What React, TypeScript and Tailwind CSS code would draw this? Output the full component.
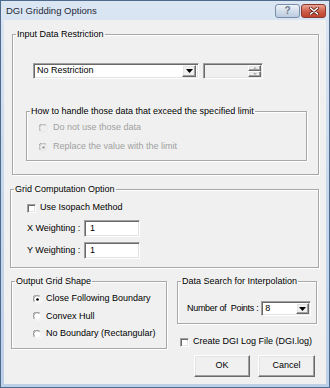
import React from 'react';

const sunken =
  'border border-t-[#a0a0a0] border-l-[#a0a0a0] border-b-white border-r-white shadow-[inset_1px_1px_0_#696969,inset_-1px_-1px_0_#e3e3e3]';
const raised =
  'border border-t-white border-l-white border-b-[#696969] border-r-[#696969] shadow-[inset_-1px_-1px_0_#a0a0a0,inset_1px_1px_0_#e3e3e3] bg-[#f0f0f0]';

function Group({
  label,
  className,
  children,
}: {
  label: string;
  className: string;
  children?: React.ReactNode;
}) {
  return (
    <fieldset
      className={`border border-[#a8a8a8] shadow-[inset_1px_1px_0_#fff,1px_1px_0_#fff] min-w-0 ${className}`}
    >
      <legend className="ml-[3px] px-[1px] leading-[11px] text-black">{label}</legend>
      {children}
    </fieldset>
  );
}

function Radio({ checked, disabled }: { checked?: boolean; disabled?: boolean }) {
  return (
    <svg width="9" height="9" viewBox="0 0 12 12" className="shrink-0">
      <circle cx="6" cy="6" r="5.5" fill={disabled ? '#f0f0f0' : '#fff'} />
      <path d="M1.2 9 A5.3 5.3 0 0 1 9 1.2" fill="none" stroke="#9a9a9a" strokeWidth="1.2" />
      <path d="M2.2 8.6 A4.3 4.3 0 0 1 8.6 2.2" fill="none" stroke={disabled ? '#b0b0b0' : '#696969'} strokeWidth="1" />
      <path d="M9 1.2 A5.3 5.3 0 0 1 1.2 9" fill="none" stroke="#e3e3e3" strokeWidth="1" />
      {checked && <circle cx="6" cy="6" r="1.8" fill={disabled ? '#a0a0a0' : '#000'} />}
    </svg>
  );
}

function Check() {
  return <div className={`w-[9px] h-[9px] bg-white shrink-0 ${sunken}`} />;
}

function DropButton({ className }: { className: string }) {
  return (
    <div className={`flex items-center justify-center ${raised} ${className}`}>
      <svg width="7" height="4" viewBox="0 0 7 4">
        <path d="M0 0 H7 L3.5 4 Z" fill="#000" />
      </svg>
    </div>
  );
}

export default function App() {
  return (
    <div className="w-[330px] h-[388px] border border-[#4e6a8c] bg-gradient-to-b from-[#dbe6f3] via-[#c6d7ec] to-[#bcd0e8] flex flex-col font-['Liberation_Sans',Arial,sans-serif] text-[9px] text-black select-none">
      {/* title bar */}
      <div className="h-[19px] flex items-center pl-[5px] pr-[3px] shrink-0">
        <span className="text-[9.5px] text-[#1e2a3a] pt-[1px]">DGI Gridding Options</span>
        <div className="ml-auto flex gap-[1px] self-start mt-[3px]">
          <div className="w-[25px] h-[14px] rounded-[3px] border border-[#7a8ea8] bg-gradient-to-b from-[#eef3f9] via-[#d3deeb] to-[#bccbde] flex items-center justify-center text-[10px] leading-none text-[#6d7a8c] font-bold">
            ?
          </div>
          <div className="w-[25px] h-[14px] rounded-[3px] border border-[#8a3a30] bg-gradient-to-b from-[#e9a594] via-[#d0604c] to-[#c0402c] flex items-center justify-center">
            <svg width="10" height="8" viewBox="0 0 10 8">
              <path d="M1.5 1 L8.5 7 M8.5 1 L1.5 7" stroke="#5a2018" strokeWidth="3" strokeLinecap="round" />
              <path d="M1.5 1 L8.5 7 M8.5 1 L1.5 7" stroke="#fff" strokeWidth="1.6" strokeLinecap="round" />
            </svg>
          </div>
        </div>
      </div>

      {/* client area */}
      <div className="mx-[3px] h-[364px] bg-[#f0f0f0] flex flex-col">
        <Group label="Input Data Restriction" className="mt-[9px] ml-[8px] w-[307px] h-[146px]">
          <div className="flex mt-[23px] ml-[20px] gap-[4px]">
            <div className={`w-[166px] h-[16px] bg-white flex items-center p-[2px] ${sunken}`}>
              <span className="pl-[1px] flex-1">No Restriction</span>
              <DropButton className="w-[14px] h-[12px]" />
            </div>
            <div className={`w-[60px] h-[16px] bg-[#f0f0f0] flex justify-end p-[1px] ${sunken}`}>
              <div className="flex flex-col w-[13px]">
                <div className={`flex-1 flex items-center justify-center ${raised}`}>
                  <svg width="4" height="2" viewBox="0 0 4 2"><path d="M0 2 L2 0 L4 2Z" fill="#b0b0b0" /></svg>
                </div>
                <div className={`flex-1 flex items-center justify-center ${raised}`}>
                  <svg width="4" height="2" viewBox="0 0 4 2"><path d="M0 0 L2 2 L4 0Z" fill="#b0b0b0" /></svg>
                </div>
              </div>
            </div>
          </div>

          <Group
            label="How to handle those data that exceed the specified limit"
            className="mt-[27px] ml-[13px] w-[281px] h-[55px]"
          >
            <div className="flex flex-col mt-[4px] ml-[12px] gap-[5px] text-[#a0a0a0]">
              <div className="h-[14px] flex items-center gap-[5px]">
                <Radio disabled />
                <span>Do not use those data</span>
              </div>
              <div className="h-[14px] flex items-center gap-[5px]">
                <Radio disabled checked />
                <span>Replace the value with the limit</span>
              </div>
            </div>
          </Group>
        </Group>

        <Group label="Grid Computation Option" className="mt-[9px] ml-[6px] w-[309px] h-[84px]">
          <div className="flex flex-col ml-[16px] mt-[6px]">
            <div className="h-[14px] flex items-center gap-[4px]">
              <Check />
              <span>Use Isopach Method</span>
            </div>
            <div className="h-[17px] mt-[5px] flex items-center">
              <span className="w-[57px]">X Weighting :</span>
              <div className={`w-[56px] h-[17px] bg-white flex items-center pl-[5px] ${sunken}`}>1</div>
            </div>
            <div className="h-[17px] mt-[5px] flex items-center">
              <span className="w-[57px]">Y Weighting :</span>
              <div className={`w-[56px] h-[17px] bg-white flex items-center pl-[5px] ${sunken}`}>1</div>
            </div>
          </div>
        </Group>

        <div className="flex mt-[8px] ml-[7px] h-[73px] gap-[10px]">
          <Group label="Output Grid Shape" className="w-[156px] h-[73px]">
            <div className="flex flex-col ml-[21px] mt-[5px] gap-[3.5px]">
              <div className="h-[14px] flex items-center gap-[4px]">
                <Radio checked />
                <span>Close Following Boundary</span>
              </div>
              <div className="h-[14px] flex items-center gap-[4px]">
                <Radio />
                <span>Convex Hull</span>
              </div>
              <div className="h-[14px] flex items-center gap-[4px]">
                <Radio />
                <span>No Boundary (Rectangular)</span>
              </div>
            </div>
          </Group>

          <div className="flex flex-col">
            <Group label="Data Search for Interpolation" className="w-[140px] h-[48px]">
              <div className="flex items-center ml-[9px] mt-[14px]">
                <span className="shrink-0 whitespace-pre tracking-[-0.3px]">Number of  Points :</span>
                <div className={`ml-[3px] w-[50px] h-[15px] bg-white flex items-center p-[1px] ${sunken}`}>
                  <span className="pl-[2px] flex-1">8</span>
                  <DropButton className="w-[13px] h-[11px]" />
                </div>
              </div>
            </Group>
            <div className="h-[14px] mt-[11px] ml-[3px] flex items-center gap-[4px]">
              <Check />
              <span>Create DGI Log File (DGI.log)</span>
            </div>
          </div>
        </div>

        <div className="flex justify-end gap-[8px] mt-[6px] mr-[11px]">
          <button className={`w-[56px] h-[22px] ${raised}`}>OK</button>
          <button className={`w-[57px] h-[22px] ${raised}`}>Cancel</button>
        </div>
      </div>
    </div>
  );
}
